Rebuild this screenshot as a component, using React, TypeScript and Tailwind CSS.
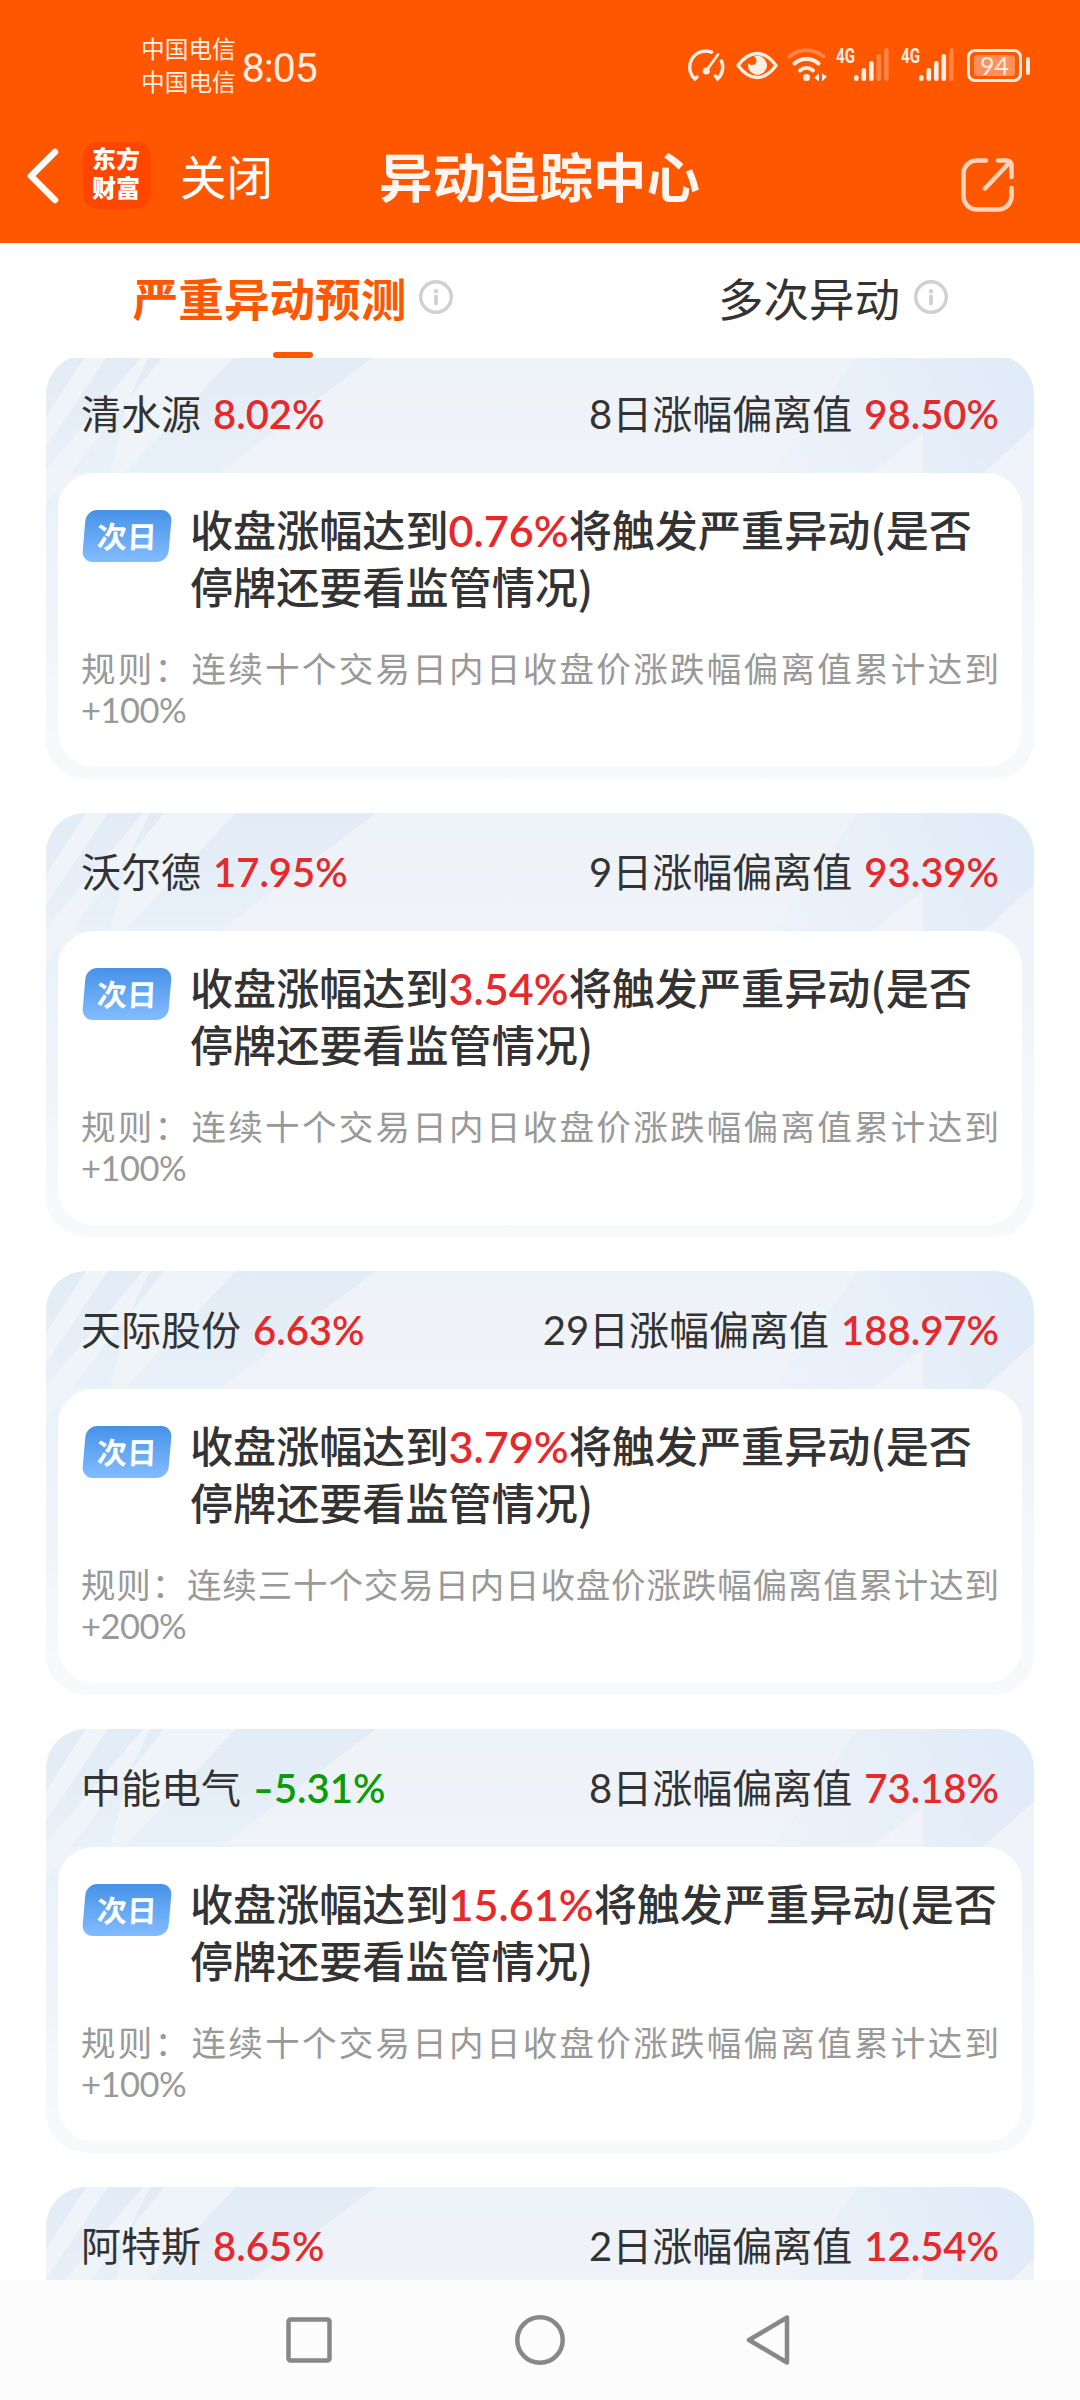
import React from 'react';

interface Stock {
  name: string;
  change: string;
  days: string;
  deviation: string;
  trigger: string;
  period: string;
  limit: string;
}

const stocks: Stock[] = [
  { name: '清水源', change: '8.02%', days: '8', deviation: '98.50%', trigger: '0.76%', period: '十', limit: '+100%' },
  { name: '沃尔德', change: '17.95%', days: '9', deviation: '93.39%', trigger: '3.54%', period: '十', limit: '+100%' },
  { name: '天际股份', change: '6.63%', days: '29', deviation: '188.97%', trigger: '3.79%', period: '三十', limit: '+200%' },
  { name: '中能电气', change: '-5.31%', days: '8', deviation: '73.18%', trigger: '15.61%', period: '十', limit: '+100%' },
];

const SignalBars = ({ active }: { active: number }) => (
  <svg width="36" height="34" viewBox="0 0 36 34" fill="#ffeee4">
    {[27, 20, 13, 6, 0].map((y, i) => (
      <rect key={y} x={i * 7.5} y={y} width="4.6" height={33 - y} rx="2.3" opacity={i < active ? 1 : 0.3} />
    ))}
  </svg>
);

const StatusBar = () => (
  <div className="flex h-[100px] items-start pt-[33px] pl-[141px] text-[#ffeee4]">
    <div className="text-[23.7px] leading-[33px]">
      <p>中国电信</p>
      <p>中国电信</p>
    </div>
    <span className="ml-[6px] mt-[11px] font-['Roboto',sans-serif] text-[41px] leading-[48px] tracking-[-1px]">8:05</span>
    <div className="ml-auto mr-[50px] mt-[15px] flex items-start">
      <svg width="37" height="34" viewBox="0 0 37 34" fill="none" stroke="#ffeee4" strokeWidth="3.4" strokeLinecap="round">
        <path d="M23.5 4.2A16 16 0 0 0 7 31l2-2" />
        <path d="M33.5 13a16 16 0 0 1-4 18l-2-3" />
        <circle cx="18.2" cy="23" r="3.6" fill="#ffeee4" stroke="none" />
        <path d="M18.2 23 30 6.5" strokeWidth="2.8" />
      </svg>
      <svg className="ml-[11px]" width="42" height="34" viewBox="0 0 42 34" fill="none">
        <path d="M2 17.5C9 8 15 5.5 21 5.5S33 8 40 17.5C33 27 27 29.5 21 29.5S9 27 2 17.5Z" stroke="#ffeee4" strokeWidth="3.4" strokeLinejoin="round" />
        <path d="M18 8.5a9.5 9.5 0 1 1-6 9c0-1 .2-1.7.5-2.3 1.5 2 4 2.3 6 1 2.6-1.7 2.6-5.5-.5-7.700Z" fill="#ffeee4" />
      </svg>
      <svg className="ml-[9px]" width="42" height="34" viewBox="0 0 42 34" fill="none" stroke="#ffeee4" strokeWidth="4" strokeLinecap="round">
        <path d="M2.5 8.5C12 0 27 0 36.5 8.5" opacity=".3" />
        <path d="M7.5 15.5c7-6 17-6 24 0" />
        <path d="M13 22.5c4-3.5 9-3.5 13 0" />
        <circle cx="19.5" cy="29.5" r="3.5" fill="#ffeee4" stroke="none" />
        <path d="M32 25.5v8l-5-4Z M35 25.5v8l5-5Z" fill="#ffeee4" stroke="none" />
      </svg>
      <span className="ml-[7px] w-[18px] origin-left scale-x-[0.72] font-['Roboto',sans-serif] text-[21px] font-bold leading-[16px]">4G</span>
      <SignalBars active={3} />
      <span className="ml-[11px] w-[18px] origin-left scale-x-[0.72] font-['Roboto',sans-serif] text-[21px] font-bold leading-[16px]">4G</span>
      <SignalBars active={4} />
      <div className="ml-[12px] mt-px flex items-center">
        <div className="flex h-[33px] w-[55px] items-center justify-center rounded-[8px] border-[3px] border-[#ffeee4]">
          <span className="flex h-[21px] w-[41px] items-center justify-center rounded-[3px] bg-[#ff8f5b] font-['Lato',sans-serif] text-[25px]">94</span>
        </div>
        <span className="ml-1 h-[18px] w-1 rounded-full bg-[#ffeee4]" />
      </div>
    </div>
  </div>
);

const NavBar = () => (
  <div className="flex h-[143px] items-start text-white">
    <svg className="ml-[26px] mt-[47px]" width="34" height="58" viewBox="0 0 34 58" fill="none" stroke="white" strokeWidth="6.5" strokeLinecap="round" strokeLinejoin="round">
      <path d="M29 5 5 29l24 24" />
    </svg>
    <div className="ml-[23px] mt-[42px] flex h-[67px] w-[68px] flex-col items-center rounded-[15px] bg-[#ff4600] pt-[2px] pr-[2px] text-[24px] font-black leading-[29px]">
      <span>东方</span>
      <span>财富</span>
    </div>
    <span className="ml-[29px] mt-[43px] text-[46.5px] leading-[68px]">关闭</span>
    <h1 className="ml-[106px] mt-[42px] text-[53.5px] font-bold leading-[70px] text-[#fff5f0]">异动追踪中心</h1>
    <svg className="ml-auto mr-[64px] mt-[57px]" width="56" height="56" viewBox="0 0 56 56" fill="none" stroke="#ffd3ba" strokeWidth="4.6" strokeLinecap="round" strokeLinejoin="round">
      <path d="M26 3.5H17A13.5 13.5 0 0 0 3.5 17v22A13.5 13.5 0 0 0 17 52.5h21A13.5 13.5 0 0 0 51.5 39v-8" />
      <path d="M38 3.5h8.5a5 5 0 0 1 5 5V20" />
      <path d="M25 31.5 50 5" />
    </svg>
  </div>
);

const InfoIcon = () => (
  <svg className="-mt-[7px]" width="34" height="34" viewBox="0 0 34 34" fill="none">
    <circle cx="17" cy="17" r="15.3" stroke="#d0d0d0" strokeWidth="3.4" />
    <circle cx="17" cy="11.2" r="2.2" fill="#d0d0d0" />
    <path d="M17 16.5v7" stroke="#d0d0d0" strokeWidth="3.8" strokeLinecap="round" />
  </svg>
);

const Tabs = () => (
  <div className="flex h-[115px] shrink-0">
    <div className="flex w-[585px] flex-col items-center">
      <div className="mt-[23px] flex h-[68px] items-center gap-[13px] pl-[1px]">
        <span className="text-[45.6px] font-bold text-[#ff5700]">严重异动预测</span>
        <InfoIcon />
      </div>
      <span className="mt-[18px] h-[6px] w-[40px] rounded-full bg-[#ff5700]" />
    </div>
    <div className="ml-[133px] mt-[23px] flex h-[68px] items-center gap-[14px]">
      <span className="text-[45.5px] text-[#333]">多次异动</span>
      <InfoIcon />
    </div>
  </div>
);

// Light beams behind the card header
const CardBackdrop = () => (
  <svg className="absolute inset-0" width="988" height="424" viewBox="0 0 988 424">
    <defs>
      <linearGradient id="base" gradientUnits="userSpaceOnUse" x1="0" y1="0" x2="0" y2="424">
        <stop offset="0" stopColor="#eef3f8" />
        <stop offset=".3" stopColor="#f0f3f9" />
        <stop offset="1" stopColor="#f8f9fb" />
      </linearGradient>
      <linearGradient id="beam" gradientUnits="userSpaceOnUse" x1="0" y1="0" x2="0" y2="424">
        <stop offset="0" stopColor="#e2ecf6" />
        <stop offset=".3" stopColor="#e9f1f9" />
        <stop offset="1" stopColor="#f8f9fb" />
      </linearGradient>
      <linearGradient id="beamRight" gradientUnits="userSpaceOnUse" x1="740" y1="118" x2="988" y2="0">
        <stop offset="0" stopColor="#edf2f9" />
        <stop offset="1" stopColor="#dfebf8" />
      </linearGradient>
    </defs>
    <rect width="988" height="424" fill="url(#base)" />
    <path d="M0 0h330L174 118H12V424H0Z" fill="url(#beam)" />
    <path d="M40 0h22L0 92V62Z M97 0h7L82 45 28 114 0 150v-35Z M118 0h72L78 118H64L82 45Z" fill="#eff4f9" />
    <path d="M812 0h176v72l-51 46h-60V77l-51 41h-99Z" fill="url(#beamRight)" />
  </svg>
);

const CardHeader = ({ stock }: { stock: Stock }) => {
  const falling = stock.change.startsWith('-');
  return (
    <header className="flex h-[118px] shrink-0 items-center justify-between px-[23px] text-[40px] leading-[60px] text-[#333]">
      <p className="flex gap-[12px]">
        {stock.name}
        <span className={falling ? 'flex font-semibold text-[#0a9d0a]' : 'font-semibold text-[#e62a2c]'}>
          {falling && <span className="mr-[6px] origin-left scale-x-[1.4]">-</span>}
          {stock.change.replace('-', '')}
        </span>
      </p>
      <p className="flex gap-[12px]">
        {stock.days}日涨幅偏离值
        <span className="font-semibold text-[#e62a2c]">{stock.deviation}</span>
      </p>
    </header>
  );
};

const StockCard = ({ stock }: { stock: Stock }) => (
  <article className="relative h-[424px] shrink-0 overflow-hidden rounded-[40px]">
    <CardBackdrop />
    <div className="relative flex h-full flex-col px-[12px] pb-[12px]">
      <CardHeader stock={stock} />
      <div className="flex-1 rounded-[36px] bg-white px-[23px] pt-[29px]">
        <div className="flex items-start">
          <div className="mt-[8px] ml-[3px] flex h-[52px] w-[86px] shrink-0 -skew-x-[5deg] items-center justify-center rounded-[11px] bg-linear-to-b from-[#4692e8] to-[#82bcff] text-[30px] font-bold text-white">
            <span className="skew-x-[3deg]">次日</span>
          </div>
          <p className="ml-[20px] w-[825px] text-[43.1px] font-medium leading-[57px] text-[#333]">
            收盘涨幅达到<span className="font-semibold text-[#e62a2c]">{stock.trigger}</span>将触发严重异动
            <span className="font-['Noto_Sans_CJK_SC',sans-serif] leading-none">(</span>是否
            <br />
            停牌还要看监管情况
            <span className="font-['Noto_Sans_CJK_SC',sans-serif] leading-none">)</span>
          </p>
        </div>
        <p className="mt-[32px] w-[918px] text-justify text-[34.5px] leading-[41px] text-[#999]">
          规则：连续{stock.period}个交易日内日收盘价涨跌幅偏离值累计达到
          <span className="tracking-[-0.5px]">{stock.limit}</span>
        </p>
      </div>
    </div>
  </article>
);

const SystemNav = () => (
  <nav className="flex h-[120px] shrink-0 items-center justify-center gap-[178px] bg-[#fcfcfc]">
    <svg width="52" height="52" viewBox="0 0 52 52" fill="none" stroke="#888" strokeWidth="4.5">
      <rect x="4.5" y="5.5" width="41" height="41" rx="2" />
    </svg>
    <svg width="52" height="52" viewBox="0 0 52 52" fill="none" stroke="#888" strokeWidth="4.5">
      <circle cx="26" cy="26" r="22.7" />
    </svg>
    <svg width="52" height="52" viewBox="0 0 52 52" fill="none" stroke="#888" strokeWidth="4.5" strokeLinejoin="round">
      <path d="M43 3.5v45L5 26Z" />
    </svg>
  </nav>
);

const App: React.FC = () => {
  return (
    <div className="flex h-[2400px] w-[1080px] flex-col overflow-hidden bg-white font-['Lato','Noto_Sans_CJK_SC',sans-serif]">
      <header className="h-[243px] shrink-0 bg-[#ff5700]">
        <StatusBar />
        <NavBar />
      </header>
      <Tabs />
      <main className="flex min-h-0 flex-1 flex-col overflow-hidden px-[46px]">
        <div className="-mt-[3px] flex flex-col gap-[34px]">
          {stocks.map((stock) => (
            <StockCard key={stock.name} stock={stock} />
          ))}
          {/* Last row is only scrolled in up to its header */}
          <article className="relative h-[93px] overflow-hidden rounded-t-[40px]">
            <CardBackdrop />
            <div className="relative px-[12px]">
              <CardHeader
                stock={{ name: '阿特斯', change: '8.65%', days: '2', deviation: '12.54%', trigger: '', period: '', limit: '' }}
              />
            </div>
          </article>
        </div>
      </main>
      <SystemNav />
    </div>
  );
};

export default App;
